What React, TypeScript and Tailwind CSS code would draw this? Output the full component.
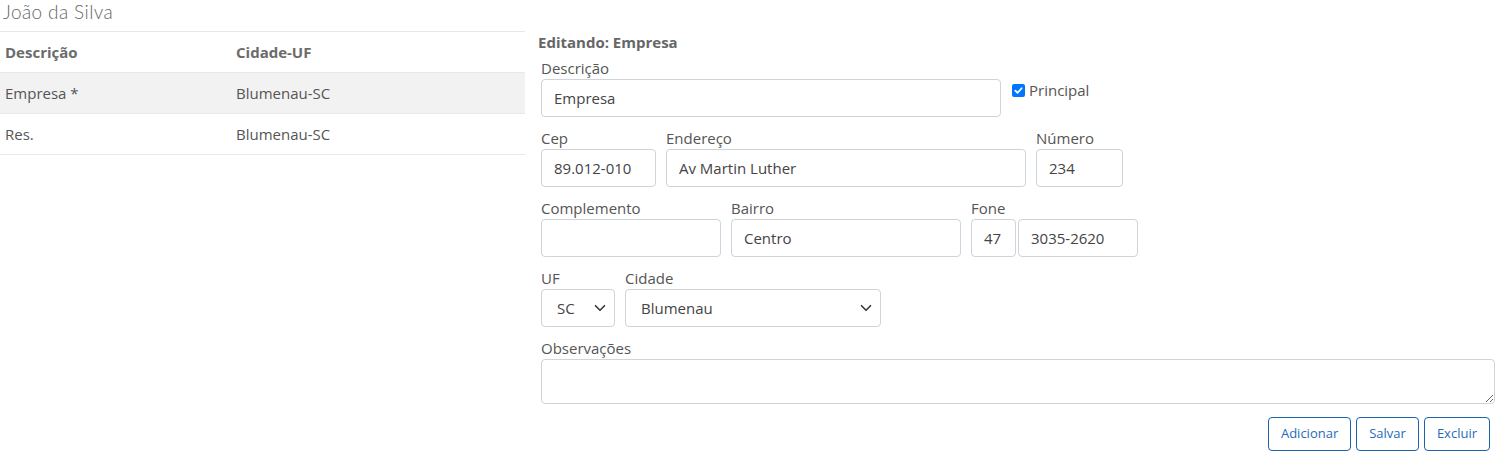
import React from 'react';

const font = { fontFamily: '"Open Sans", "Noto Sans", sans-serif' };

function Chevron() {
  return (
    <svg
      width="12"
      height="12"
      viewBox="0 0 16 16"
      className="pointer-events-none absolute right-[9px] top-[13px]"
    >
      <path
        d="M2 5l6 6 6-6"
        fill="none"
        stroke="#343a40"
        strokeWidth="2.2"
        strokeLinecap="round"
        strokeLinejoin="round"
      />
    </svg>
  );
}

function Field({
  label,
  value,
  width,
}: {
  label: string;
  value: string;
  width: string;
}) {
  return (
    <div className={`flex flex-col ${width}`}>
      <label className="h-[21px] text-[15px] leading-[21px] text-[#555]">
        {label}
      </label>
      <input
        readOnly
        value={value}
        className="h-[38px] w-full rounded-[4px] border border-[#ced4da] bg-white px-[12px] text-[15px] text-[#444] outline-none"
      />
    </div>
  );
}

function Select({
  label,
  value,
  width,
}: {
  label: string;
  value: string;
  width: string;
}) {
  return (
    <div className={`flex flex-col ${width}`}>
      <label className="h-[21px] text-[15px] leading-[21px] text-[#555]">
        {label}
      </label>
      <div className="relative">
        <select
          value={value}
          onChange={() => {}}
          className="h-[38px] w-full appearance-none rounded-[4px] border border-[#ced4da] bg-white pl-[15px] pr-[28px] text-[15px] text-[#444] outline-none"
        >
          <option value={value}>{value}</option>
        </select>
        <Chevron />
      </div>
    </div>
  );
}

export default function App() {
  const rows = [
    { desc: 'Empresa *', city: 'Blumenau-SC', active: true },
    { desc: 'Res.', city: 'Blumenau-SC', active: false },
  ];

  return (
    <div className="h-[453px] w-[1497px] bg-white" style={font}>
      <div
        className="pl-[3px] text-[19px] font-light leading-[24px] tracking-[0.4px] text-[#666]"
        style={{ fontFamily: 'Lato, "Open Sans", sans-serif' }}
      >
        João da Silva
      </div>

      <div className="flex gap-[13px]">
        {/* lista */}
        <div className="mt-[7px] w-[525px] text-[15px]">
          <div className="flex h-[41px] items-center border-t border-[#e8e8e8] font-bold text-[#6b6b6b]">
            <div className="w-[236px] pl-[5px]">Descrição</div>
            <div>Cidade-UF</div>
          </div>
          {rows.map((r) => (
            <div
              key={r.desc}
              className={`flex h-[41px] items-center border-t border-[#e8e8e8] text-[#555] ${
                r.active ? 'bg-[#f2f2f2]' : ''
              }`}
            >
              <div className="w-[236px] pl-[5px]">{r.desc}</div>
              <div>{r.city}</div>
            </div>
          ))}
          <div className="border-t border-[#e8e8e8]" />
        </div>

        {/* formulario */}
        <div className="flex-1 pr-[2px]">
          <div className="mt-[9px] text-[15px] font-bold leading-[19px] text-[#666]">
            Editando: Empresa
          </div>

          <div className="pl-[3px]">
            <div className="mt-[6px] flex items-start">
              <Field label="Descrição" value="Empresa" width="w-[460px]" />
              <label className="ml-[11px] mt-[21px] flex items-center gap-[4px] text-[15px] text-[#555]">
                <span className="flex h-[13px] w-[13px] items-center justify-center rounded-[2px] bg-[#0075ff]">
                  <svg width="9" height="9" viewBox="0 0 10 10">
                    <path
                      d="M1.5 5.2l2.4 2.4L8.5 2.5"
                      fill="none"
                      stroke="white"
                      strokeWidth="1.9"
                      strokeLinecap="round"
                      strokeLinejoin="round"
                    />
                  </svg>
                </span>
                Principal
              </label>
            </div>

            <div className="mt-[11px] flex gap-[10px]">
              <Field label="Cep" value="89.012-010" width="w-[115px]" />
              <Field label="Endereço" value="Av Martin Luther" width="w-[360px]" />
              <Field label="Número" value="234" width="w-[87px]" />
            </div>

            <div className="mt-[11px] flex gap-[10px]">
              <Field label="Complemento" value="" width="w-[180px]" />
              <Field label="Bairro" value="Centro" width="w-[230px]" />
              <div className="flex gap-[2px]">
                <Field label="Fone" value="47" width="w-[45px]" />
                <Field label=" " value="3035-2620" width="w-[120px]" />
              </div>
            </div>

            <div className="mt-[11px] flex gap-[10px]">
              <Select label="UF" value="SC" width="w-[74px]" />
              <Select label="Cidade" value="Blumenau" width="w-[256px]" />
            </div>

            <div className="mt-[11px] flex flex-col">
              <label className="h-[21px] text-[15px] leading-[21px] text-[#555]">
                Observações
              </label>
              <textarea
                readOnly
                className="h-[45px] w-full resize-y rounded-[4px] border border-[#ced4da] bg-white outline-none"
              />
            </div>

            <div className="mt-[13px] flex justify-end gap-[5px] pr-[5px]">
              {['Adicionar', 'Salvar', 'Excluir'].map((b) => (
                <button
                  key={b}
                  className="h-[34px] rounded-[4px] border border-[#1a62aa] bg-white px-[12px] text-[13px] text-[#1f6cb8]"
                >
                  {b}
                </button>
              ))}
            </div>
          </div>
        </div>
      </div>
    </div>
  );
}
